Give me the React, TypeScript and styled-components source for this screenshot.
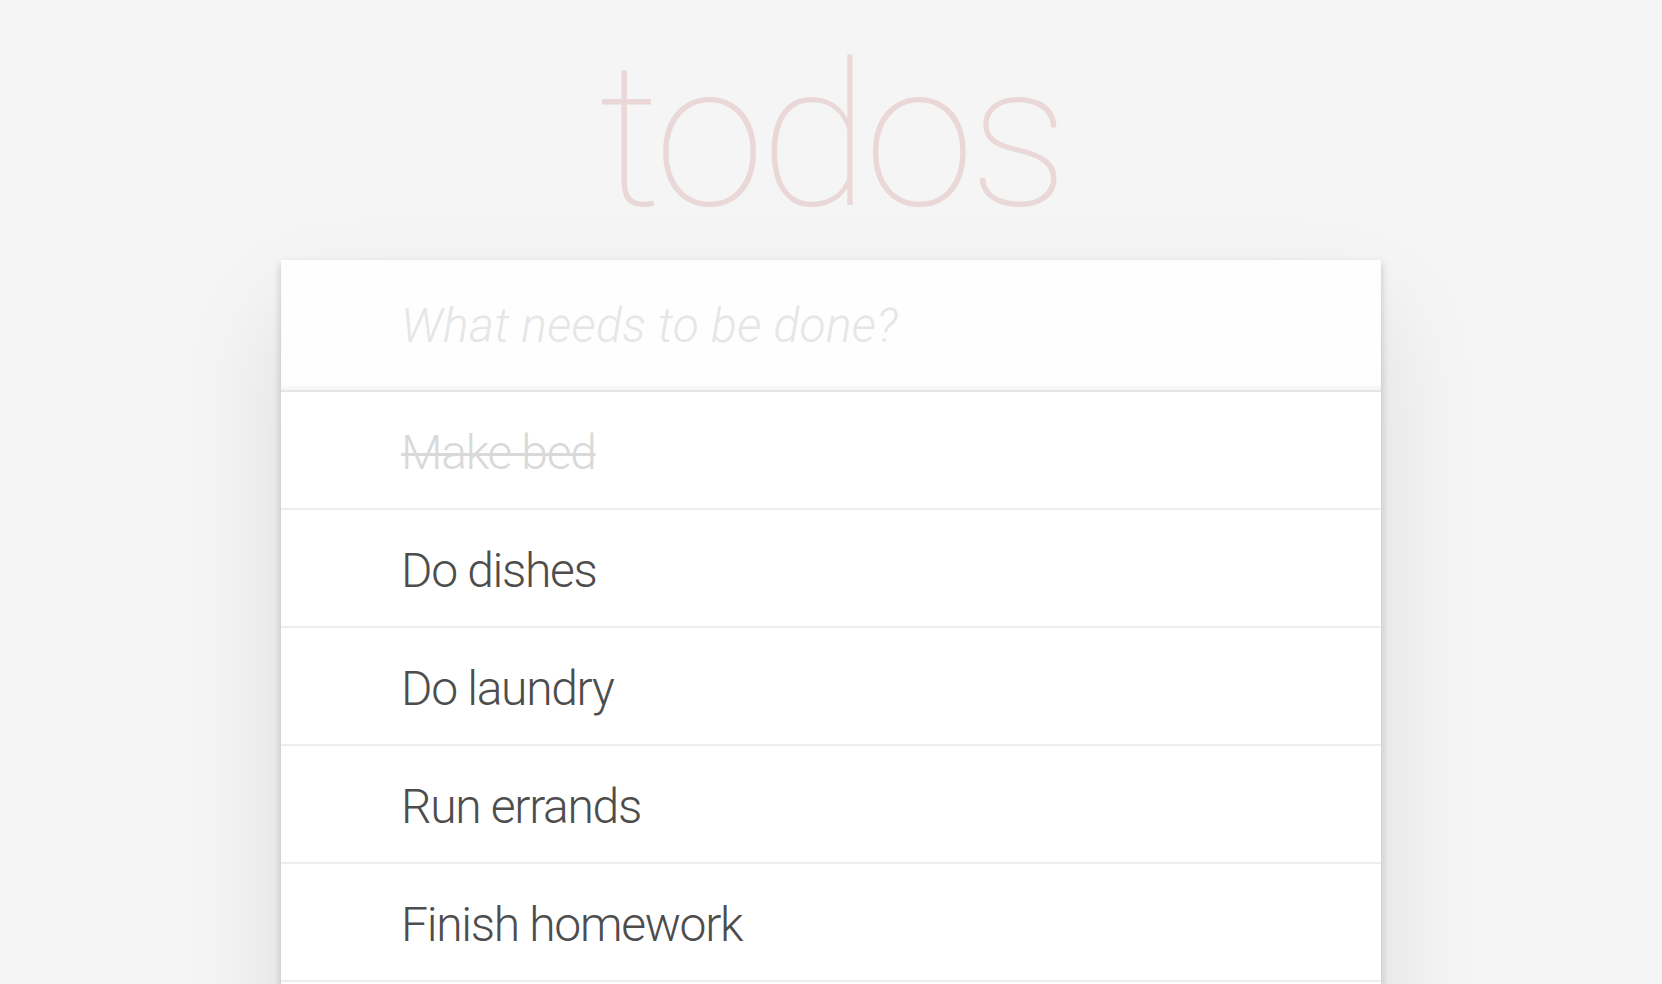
import React from 'react';
import styled, { createGlobalStyle } from 'styled-components';

const GlobalStyle = createGlobalStyle`
  html, body {
    margin: 0;
    padding: 0;
    height: 100%;
    overflow: hidden;
  }

  body {
    background: #f5f5f5;
    font-family: 'Roboto', 'Liberation Sans', sans-serif;
    font-weight: 300;
    color: #4d4d4d;
    -webkit-font-smoothing: antialiased;
  }
`;

const Page = styled.div`
  display: flex;
  flex-direction: column;
  align-items: center;
`;

const Title = styled.h1`
  margin: 0;
  height: 260px;
  width: 100%;
  font-size: 200px;
  font-weight: 100;
  line-height: 274px;
  letter-spacing: -5px;
  text-align: center;
  color: rgba(175, 47, 47, 0.15);
  text-rendering: optimizeLegibility;
`;

const Card = styled.section`
  width: 1100px;
  background: #fff;
  box-shadow: 0 4px 8px rgba(0, 0, 0, 0.2), 0 50px 100px 0 rgba(0, 0, 0, 0.1);
`;

const NewTodo = styled.input`
  display: block;
  box-sizing: border-box;
  width: 100%;
  height: 130px;
  margin: 0;
  padding: 32px 32px 32px 120px;
  border: none;
  outline: none;
  background: rgba(0, 0, 0, 0.003);
  box-shadow: inset 0 -4px 2px rgba(0, 0, 0, 0.03);
  font-family: inherit;
  font-size: 48px;
  font-weight: 300;
  color: inherit;

  &::placeholder {
    font-style: italic;
    font-weight: 300;
    letter-spacing: 0.3px;
    color: #e6e6e6;
  }
`;

const List = styled.ul`
  margin: 0;
  padding: 0;
  list-style: none;
  border-top: 2px solid #e6e6e6;
`;

const Item = styled.li`
  border-bottom: 2px solid #ededed;
`;

const Label = styled.label<{ done?: boolean }>`
  display: block;
  padding: 31.6px 30px 26.8px 120px;
  font-size: 48px;
  line-height: 1.2;
  letter-spacing: -1.3px;
  word-break: break-all;
  color: ${({ done }) => (done ? '#d9d9d9' : '#4d4d4d')};
  text-decoration: ${({ done }) => (done ? 'line-through' : 'none')};
  text-decoration-thickness: 3px;
`;

// footer strip below the list (runs past the bottom of the window)
const Footer = styled.footer`
  height: 80px;
`;

interface Todo {
  title: string;
  completed: boolean;
}

const todos: Todo[] = [
  { title: 'Make bed', completed: true },
  { title: 'Do dishes', completed: false },
  { title: 'Do laundry', completed: false },
  { title: 'Run errands', completed: false },
  { title: 'Finish homework', completed: false },
];

export default function App(): JSX.Element {
  return (
    <>
      <GlobalStyle />
      <Page>
        <Title>todos</Title>
        <Card>
          <NewTodo placeholder="What needs to be done?" />
          <List>
            {todos.map((todo) => (
              <Item key={todo.title}>
                <Label done={todo.completed}>{todo.title}</Label>
              </Item>
            ))}
          </List>
          <Footer />
        </Card>
      </Page>
    </>
  );
}
